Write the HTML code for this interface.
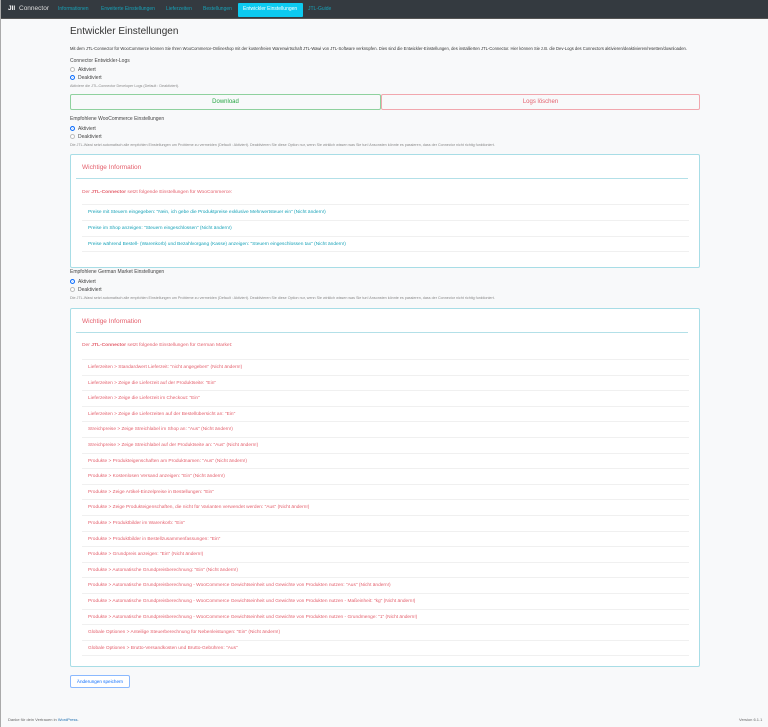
<!DOCTYPE html>
<html><head><meta charset="utf-8"><style>
*{margin:0;padding:0;box-sizing:border-box}
body{width:768px;height:727px;background:#f8f9fa;font-family:"Liberation Sans",sans-serif;position:relative;overflow:hidden;border-left:1px solid #aaa}
.a{position:absolute;white-space:nowrap}
.nav{position:absolute;left:0;top:0;width:768px;height:19px;background:#343a40;border-bottom:1px solid #555}
.nav span{position:absolute;top:6px;font-size:5px;color:#17a2b8}
.sm{font-size:4.15px;color:#333}
.lb{font-size:5px;color:#444}
.hp{font-size:3.7px;color:#888}
.rad{position:absolute;width:5px;height:5px;border-radius:50%;border:1px solid #bbb;background:#fff}
.rad.on{background:#0d6efd;border-color:#0d6efd;box-shadow:inset 0 0 0 1.2px #fff}
.card{position:absolute;left:69px;width:630px;background:#fff;border:1px solid #a8dde6;border-radius:2px}
.ch{position:absolute;left:11px;font-size:6.5px;color:#e4606d}
.cl{position:absolute;left:5px;right:11px;height:1px;background:#b3e0e8}
.it{position:absolute;left:11px;width:607px;border-top:1px solid #f0f0f0;font-size:4.8px;padding-left:6px}
</style></head><body>
<div class="nav">
<span style="left:7px;top:5px;color:#fff;font-size:6.5px;font-weight:bold">Jll</span>
<span style="left:18px;top:5px;color:#ddd;font-size:6.5px">Connector</span>
<span style="left:57px">Informationen</span>
<span style="left:100px">Erweiterte Einstellungen</span>
<span style="left:165px">Lieferzeiten</span>
<span style="left:202px">Bestellungen</span>
<div style="position:absolute;left:237px;top:3px;width:65px;height:14px;background:#0dcaf0;border-radius:1px"></div>
<span style="left:242px;color:#fff">Entwickler Einstellungen</span>
<span style="left:307px">JTL-Guide</span>
</div>
<div class="a" style="left:69px;top:26px;font-size:10px;color:#333">Entwickler Einstellungen</div>
<div class="a sm" style="left:69px;top:46px">Mit dem JTL-Connector für WooCommerce können Sie Ihren WooCommerce-Onlineshop mit der kostenfreien Warenwirtschaft JTL-Wawi von JTL-Software verknüpfen. Dies sind die Entwickler-Einstellungen, des installierten JTL-Connector. Hier können Sie z.B. die Dev-Logs des Connectors aktivieren/deaktivieren/resetten/downloaden.</div>
<div class="a lb" style="left:69px;top:58px">Connector Entwickler-Logs</div>
<div class="rad" style="left:69px;top:67px"></div><div class="a lb" style="left:77px;top:67px">Aktiviert</div>
<div class="rad on" style="left:69px;top:75px"></div><div class="a lb" style="left:77px;top:75px">Deaktiviert</div>
<div class="a hp" style="left:69px;top:84px">Aktiviere die JTL-Connector Developer Logs (Default : Deaktiviert).</div>
<div class="a" style="left:69px;top:94px;width:311px;height:16px;border:1px solid #8fd19e;border-radius:2px;font-size:6px;color:#28a745;text-align:center;line-height:14px">Download</div>
<div class="a" style="left:380px;top:94px;width:319px;height:16px;border:1px solid #f1a7ae;border-radius:2px;font-size:6px;color:#e4606d;text-align:center;line-height:14px">Logs löschen</div>
<div class="a lb" style="left:69px;top:116px">Empfohlene WooCommerce Einstellungen</div>
<div class="rad on" style="left:69px;top:126px"></div><div class="a lb" style="left:77px;top:126px">Aktiviert</div>
<div class="rad" style="left:69px;top:134px"></div><div class="a lb" style="left:77px;top:134px">Deaktiviert</div>
<div class="a hp" style="left:69px;top:143px">Die JTL-Wawi setzt automatisch alle empfohlen Einstellungen um Probleme zu vermeiden (Default : Aktiviert). Deaktivieren Sie diese Option nur, wenn Sie wirklich wissen was Sie tun! Ansonsten könnte es passieren, dass der Connector nicht richtig funktioniert.</div>
<div class="card" style="top:154px;height:114px">
<div class="ch" style="top:9px">Wichtige Information</div>
<div class="cl" style="top:23px"></div>
<div class="a" style="left:11px;top:35px;font-size:4.9px;color:#e4606d">Der <b>JTL-Connector</b> setzt folgende Einstellungen für WooCommerce:</div>
<div class="it" style="top:49px;height:16px;line-height:15px;color:#17a2b8">Preise mit Steuern eingegeben: "Nein, ich gebe die Produktpreise exklusive Mehrwertsteuer ein" (Nicht ändern!)</div>
<div class="it" style="top:65px;height:16px;line-height:15px;color:#17a2b8">Preise im Shop anzeigen: "Steuern eingeschlossen" (Nicht ändern!)</div>
<div class="it" style="top:81px;height:16px;line-height:15px;color:#17a2b8;border-bottom:1px solid #f0f0f0">Preise während Bestell- (Warenkorb) und Bezahlvorgang (Kasse) anzeigen: "Steuern eingeschlossen tax" (Nicht ändern!)</div>
</div>
<div class="a lb" style="left:69px;top:269px">Empfohlene German Market Einstellungen</div>
<div class="rad on" style="left:69px;top:279px"></div><div class="a lb" style="left:77px;top:279px">Aktiviert</div>
<div class="rad" style="left:69px;top:287px"></div><div class="a lb" style="left:77px;top:287px">Deaktiviert</div>
<div class="a hp" style="left:69px;top:296px">Die JTL-Wawi setzt automatisch alle empfohlen Einstellungen um Probleme zu vermeiden (Default : Aktiviert). Deaktivieren Sie diese Option nur, wenn Sie wirklich wissen was Sie tun! Ansonsten könnte es passieren, dass der Connector nicht richtig funktioniert.</div>
<div class="card" style="top:308px;height:359px">
<div class="ch" style="top:9px">Wichtige Information</div>
<div class="cl" style="top:23px"></div>
<div class="a" style="left:11px;top:34px;font-size:4.9px;color:#e4606d">Der <b>JTL-Connector</b> setzt folgende Einstellungen für German Market:</div>
<div style="position:absolute;left:0;top:50px;width:630px;color:#e4606d">
<div class="it" style="top:0;height:16px;line-height:15px">Lieferzeiten &gt; Standardwert Lieferzeit: "nicht angegeben" (Nicht ändern!)</div>
<div class="it" style="top:15.6px;height:16px;line-height:15px">Lieferzeiten &gt; Zeige die Lieferzeit auf der Produktseite: "Ein"</div>
<div class="it" style="top:31.2px;height:16px;line-height:15px">Lieferzeiten &gt; Zeige die Lieferzeit im Checkout: "Ein"</div>
<div class="it" style="top:46.8px;height:16px;line-height:15px">Lieferzeiten &gt; Zeige die Lieferzeiten auf der Bestellübersicht an: "Ein"</div>
<div class="it" style="top:62.4px;height:16px;line-height:15px">Streichpreise &gt; Zeige Streichlabel im Shop an: "Aus" (Nicht ändern!)</div>
<div class="it" style="top:78px;height:16px;line-height:15px">Streichpreise &gt; Zeige Streichlabel auf der Produktseite an: "Aus" (Nicht ändern!)</div>
<div class="it" style="top:93.6px;height:16px;line-height:15px">Produkte &gt; Produkteigenschaften am Produktnamen: "Aus" (Nicht ändern!)</div>
<div class="it" style="top:109.2px;height:16px;line-height:15px">Produkte &gt; Kostenlosen Versand anzeigen: "Ein" (Nicht ändern!)</div>
<div class="it" style="top:124.8px;height:16px;line-height:15px">Produkte &gt; Zeige Artikel-Einzelpreise in Bestellungen: "Ein"</div>
<div class="it" style="top:140.4px;height:16px;line-height:15px">Produkte &gt; Zeige Produkteigenschaften, die nicht für Varianten verwendet werden: "Aus" (Nicht ändern!)</div>
<div class="it" style="top:156px;height:16px;line-height:15px">Produkte &gt; Produktbilder im Warenkorb: "Ein"</div>
<div class="it" style="top:171.6px;height:16px;line-height:15px">Produkte &gt; Produktbilder in Bestellzusammenfassungen: "Ein"</div>
<div class="it" style="top:187.2px;height:16px;line-height:15px">Produkte &gt; Grundpreis anzeigen: "Ein" (Nicht ändern!)</div>
<div class="it" style="top:202.8px;height:16px;line-height:15px">Produkte &gt; Automatische Grundpreisberechnung: "Ein" (Nicht ändern!)</div>
<div class="it" style="top:218.4px;height:16px;line-height:15px">Produkte &gt; Automatische Grundpreisberechnung - WooCommerce Gewichtseinheit und Gewichte von Produkten nutzen: "Aus" (Nicht ändern!)</div>
<div class="it" style="top:234px;height:16px;line-height:15px">Produkte &gt; Automatische Grundpreisberechnung - WooCommerce Gewichtseinheit und Gewichte von Produkten nutzen - Maßeinheit: "kg" (Nicht ändern!)</div>
<div class="it" style="top:249.6px;height:16px;line-height:15px">Produkte &gt; Automatische Grundpreisberechnung - WooCommerce Gewichtseinheit und Gewichte von Produkten nutzen - Grundmenge: "1" (Nicht ändern!)</div>
<div class="it" style="top:265.2px;height:16px;line-height:15px">Globale Optionen &gt; Anteilige Steuerberechnung für Nebenleistungen: "Ein" (Nicht ändern!)</div>
<div class="it" style="top:280.8px;height:16px;line-height:15px;border-bottom:1px solid #f0f0f0">Globale Optionen &gt; Brutto-Versandkosten und Brutto-Gebühren: "Aus"</div>
</div>
</div>
<div class="a" style="left:69px;top:675px;width:60px;height:13px;border:1px solid #8bb9fe;border-radius:2px;background:#fff;font-size:4.6px;color:#0d6efd;text-align:center;line-height:11px">Änderungen speichern</div>
<div class="a" style="left:7px;top:717px;font-size:4px;color:#666">Danke für dein Vertrauen in <span style="color:#2271b1">WordPress</span>.</div>
<div class="a" style="left:738px;top:717px;font-size:4px;color:#666">Version 6.1.1</div>
</body></html>
